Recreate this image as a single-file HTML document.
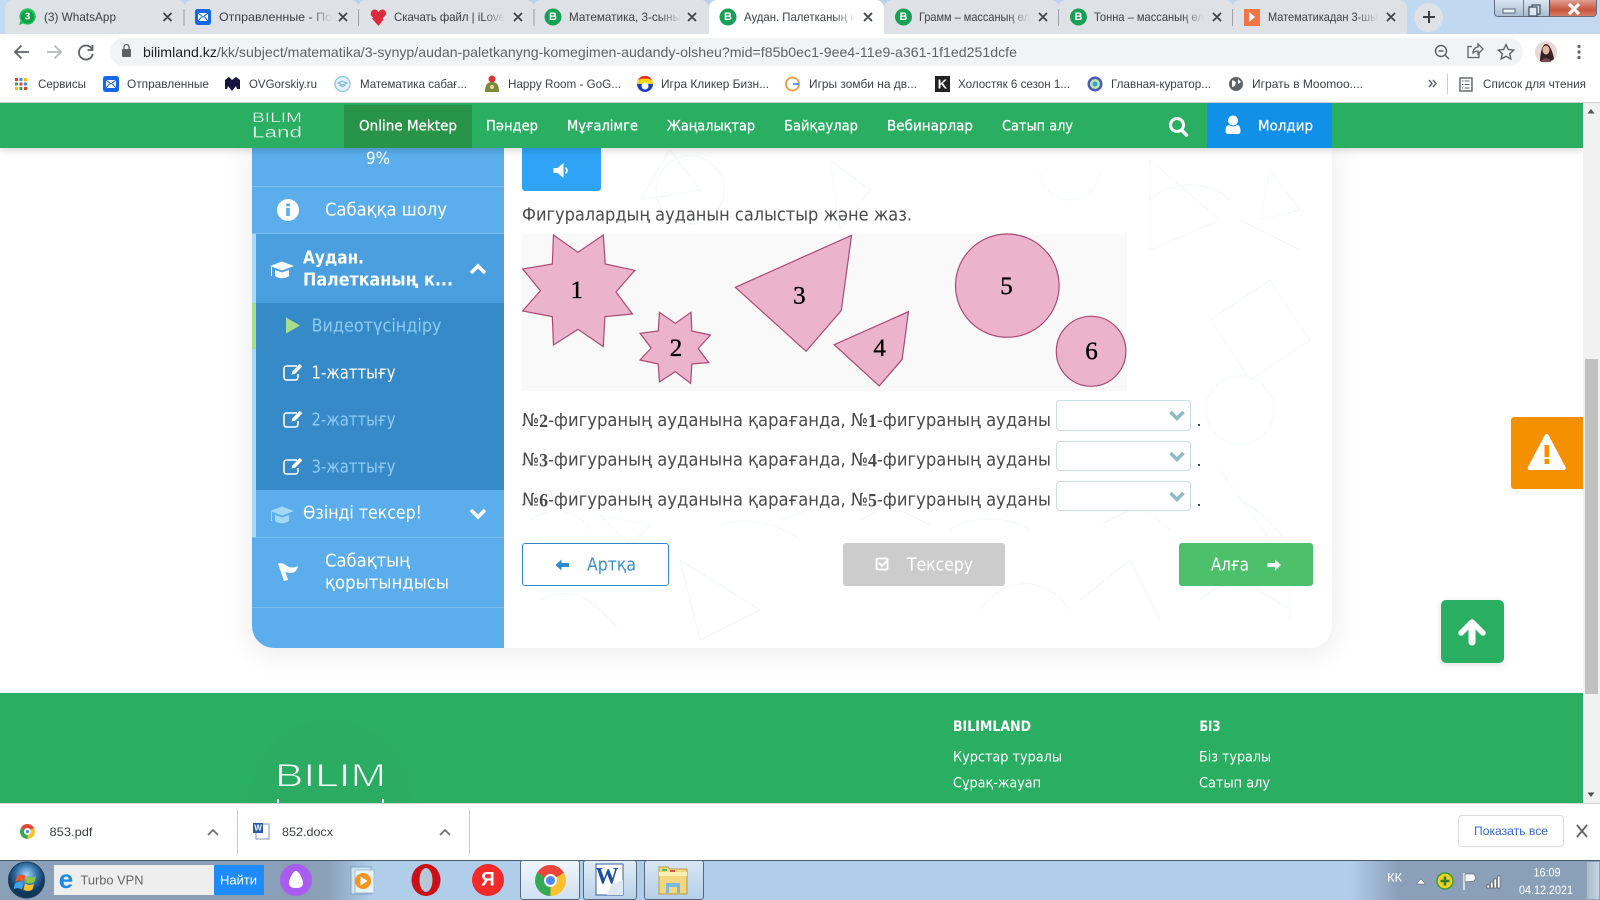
<!DOCTYPE html>
<html lang="kk"><head><meta charset="utf-8"><title>Аудан. Палетканың көмегімен</title>
<style>
html,body{margin:0;padding:0;background:#fff;overflow:hidden}
#w{position:relative;width:1600px;height:900px;overflow:hidden;background:#fff}
#w div{position:absolute;box-sizing:border-box}
.tab{top:0;height:34px;background:#dee1e6;border-radius:8px 8px 0 0}
svg{position:absolute;left:0;top:0}
text{dominant-baseline:central;white-space:pre}
.c{font-family:"Liberation Sans",sans-serif;font-size:12px;fill:#3c4043}
.s{font-family:"DejaVu Sans","Liberation Sans",sans-serif;font-size:18px}
.n{font-family:"DejaVu Sans","Liberation Sans",sans-serif;font-size:14.500px;fill:#fff;stroke:#fff;stroke-width:.25}
.f{font-family:"DejaVu Sans","Liberation Sans",sans-serif;font-size:14.500px;fill:#fff}
.q{font-family:"DejaVu Sans","Liberation Sans",sans-serif;font-size:17.500px;fill:#4a4a4a}
.d{font-family:"Liberation Serif",serif;font-weight:bold;font-size:19px}
.num{font-family:"Liberation Serif",serif;font-size:25px;fill:#000;text-anchor:middle;stroke:#000;stroke-width:.35}
.chrome{border-radius:50%;background:conic-gradient(from -60deg,#e8453c 0 120deg,#fbc02d 120deg 240deg,#34a853 240deg 360deg)}
.chrome:after{content:"";position:absolute;left:28%;top:28%;width:44%;height:44%;border-radius:50%;background:#4c8bf5;border:2px solid #fff;box-sizing:border-box}
</style></head><body><div id="w">

<!-- page -->
<div style="left:0;top:148px;width:1583px;height:545px;background:#fff"></div>
<div style="left:252px;top:140px;width:1080px;height:508px;border-radius:0 0 22px 22px;background:#fff;box-shadow:0 4px 30px rgba(0,0,0,.09)"></div>
<div style="left:252px;top:148px;width:252px;height:500px;background:#5baeeb;border-radius:0 0 0 22px"></div>
<div style="left:252px;top:186px;width:252px;height:1px;background:#7cc0f0"></div>
<div style="left:252px;top:233px;width:252px;height:1px;background:#7cc0f0"></div>
<div style="left:252px;top:234px;width:252px;height:69px;background:#4b9fdf"></div>
<div style="left:252px;top:234px;width:4px;height:303px;background:#a9d9f6"></div>
<div style="left:256px;top:303px;width:248px;height:187px;background:#378ac8"></div>
<div style="left:252px;top:303px;width:4px;height:46px;background:#a6e08a"></div>
<div style="left:252px;top:537px;width:252px;height:1px;background:#7cc0f0"></div>
<div style="left:252px;top:607px;width:252px;height:1px;background:#7cc0f0"></div>

<!-- faint pattern -->
<svg width="1600" height="900" fill="none" stroke="#f4faf8" stroke-width="1.200">
<circle cx="690" cy="190" r="34"/><path d="M640 200l30-50 30 40zM830 160l40 30-30 40zM1040 170a30 30 0 1 0 60 0M1150 160l70 60-70 30zM1240 220l60 30M1210 320l60-40 40 60-60 40z"/>
<circle cx="1240" cy="410" r="34"/><path d="M1220 470l50 70M1290 560v60M680 560l80 50-60 30zM980 610c30-40 70-30 90 0M1080 600l50-40 30 60M540 600c40-20 60 10 80 30M780 520l30-10M1200 600c30-30 60-10 90 10"/>
<path d="M530 520c20-15 50-10 60 10M600 515l50 10-20 20zM720 525c30-10 60 0 80 15M860 520l30-15 40 20M950 530c20-15 60-15 80 0M1100 525l40-20 30 25M1240 500c20 10 40 30 50 50M1150 200c20-20 60-20 80 0M1270 170l30 40-40 10z"/>
</svg>

<div style="left:522px;top:148px;width:79px;height:43px;background:#2fa4f7;border-radius:0 0 3px 3px"></div>
<div style="left:522px;top:234px;width:605px;height:157px;background:#f9f9f9"></div>

<div style="left:1055.500px;top:399.500px;width:135px;height:31px;border:1px solid #c8dfe3;border-radius:4px;background:#fff"></div>
<div style="left:1055.500px;top:441px;width:135px;height:30px;border:1px solid #c8dfe3;border-radius:4px;background:#fff"></div>
<div style="left:1055.500px;top:481px;width:135px;height:30px;border:1px solid #c8dfe3;border-radius:4px;background:#fff"></div>

<div style="left:522px;top:543px;width:147px;height:43px;border:1px solid #2f8ad0;border-radius:3px;background:#fff"></div>
<div style="left:843px;top:543px;width:162px;height:43px;border-radius:3px;background:#ccc"></div>
<div style="left:1179px;top:543px;width:134px;height:43px;border-radius:3px;background:#4cc06a"></div>

<div style="left:1511px;top:417px;width:72px;height:72px;background:#f59000;border-radius:3px 0 0 3px"></div>
<div style="left:1441px;top:600px;width:63px;height:63px;background:#2aae62;border-radius:5px;box-shadow:0 2px 8px rgba(0,0,0,.12)"></div>

<!-- footer -->
<div style="left:0;top:693px;width:1583px;height:110px;background:#2aae62"></div>
<svg width="1600" height="900">
<circle cx="330" cy="800" r="80" fill="#2bac62"/>
<text x="275" y="775.500" textLength="111" lengthAdjust="spacingAndGlyphs" style="font-family:'Liberation Sans',sans-serif;font-size:32px;fill:#fff;stroke:#2aae62;stroke-width:.9">BILIM</text>
<rect x="277" y="799" width="2" height="5" fill="#fff"/><rect x="382" y="799" width="2" height="5" fill="#fff"/>
</svg>

<!-- header nav -->
<div style="left:0;top:103px;width:1583px;height:45px;background:#2aae62;box-shadow:0 2px 8px rgba(0,0,0,.18)"></div>
<div style="left:344px;top:105px;width:128px;height:43px;background:#279447"></div>
<div style="left:1207px;top:103px;width:125px;height:45px;background:#1190e8"></div>

<!-- browser chrome -->
<div style="left:0;top:0;width:1600px;height:34px;background:linear-gradient(90deg,#c3daf0,#b6d1ed 30%,#c2d9f0)"></div>
<div class="tab" style="left:5px;width:180px"></div>
<div class="tab" style="left:184px;width:175px"></div>
<div class="tab" style="left:358px;width:176px"></div>
<div class="tab" style="left:533px;width:176px"></div>
<div class="tab" style="left:884px;width:175px"></div>
<div class="tab" style="left:1058px;width:175px"></div>
<div class="tab" style="left:1232px;width:175px"></div>
<div class="tab" style="left:709px;width:175px;background:#fff"></div>
<div style="left:1414px;top:3px;width:29px;height:29px;border-radius:50%;background:#dee1e6"></div>
<div style="left:0;top:34px;width:1600px;height:69px;background:#fff;border-bottom:1px solid #d0d0d0"></div>
<div style="left:110px;top:38px;width:1413px;height:28px;border-radius:14px;background:#f1f3f4"></div>

<!-- window controls -->
<div style="left:1494px;top:-2px;width:103px;height:19px;border:1px solid #5f6f80;border-radius:0 0 4px 4px;background:linear-gradient(#dfe9f3,#a9bccf);overflow:hidden">
<div style="left:54px;top:0;width:48px;height:18px;background:linear-gradient(#e0a79c,#c9553d 60%,#d9826e);border-left:1px solid #7a3b30"></div>
<div style="left:28px;top:0;width:1px;height:18px;background:#6d7f90"></div>
</div>

<!-- scrollbar -->
<div style="left:1583px;top:103px;width:17px;height:700px;background:#f1f1f1"></div>
<div style="left:1585px;top:359px;width:13px;height:335px;background:#c1c1c1"></div>

<!-- download bar -->
<div style="left:0;top:803px;width:1600px;height:57px;background:#fff;border-top:1px solid #d4d4d4"></div>
<div style="left:237px;top:810px;width:1px;height:44px;background:#ccc"></div>
<div style="left:469px;top:810px;width:1px;height:44px;background:#ccc"></div>
<div style="left:1458px;top:815px;width:106px;height:32px;border:1px solid #dadce0;border-radius:4px;background:#fff"></div>

<!-- taskbar -->
<div style="left:0;top:860px;width:1600px;height:40px;background:linear-gradient(90deg,#8a9fb8 0,#8a9fb8 326px,#b0cdea 372px,#b0cdea 1350px,#8a9fb8 1400px);border-top:1px solid #46586a"></div>
<div style="left:54px;top:865px;width:160px;height:30px;background:#eee"></div>
<div style="left:214px;top:865px;width:50px;height:30px;background:#1e8cff"></div>
<div style="left:520px;top:860px;width:60px;height:40px;background:linear-gradient(#f0f6fc,#cfe0f0);border:1px solid #56687a;border-radius:3px"></div>
<div style="left:583px;top:860px;width:54px;height:40px;background:linear-gradient(#e2edf7,#b9d2ea);border:1px solid #56687a;border-radius:3px"></div>
<div style="left:644px;top:860px;width:60px;height:40px;background:linear-gradient(#d8e6f4,#b5cfe9);border:1px solid #56687a;border-radius:3px"></div>
<div style="left:1586px;top:861px;width:14px;height:39px;background:linear-gradient(90deg,#a9bccd,#c5d6e6);border:1px solid #8fa2b4"></div>
<div class="chrome" style="left:535px;top:865px;width:31px;height:31px"></div>
<div class="chrome" style="left:20px;top:824px;width:15px;height:15px"></div>

<svg width="1600" height="900">
<defs>
<linearGradient id="fd"><stop offset=".8" stop-color="#3c4043"/><stop offset="1" stop-color="#dee1e6"/></linearGradient>
<linearGradient id="fa"><stop offset=".8" stop-color="#3c4043"/><stop offset="1" stop-color="#fff"/></linearGradient>
<radialGradient id="orb" cx=".5" cy=".35"><stop offset="0" stop-color="#a9d6f5"/><stop offset=".6" stop-color="#2f6fa8"/><stop offset="1" stop-color="#12395c"/></radialGradient>
</defs>

<!-- tab separators -->
<g stroke="#9aa0a6"><path d="M184 9v17M358.500 9v17M534 9v17M1058.500 9v17M1232.500 9v17"/></g>

<!-- favicons -->
<path d="M19 25l1.500-4.500a8.200 8.200 0 1 1 3 3z" fill="#25c45f"/><circle cx="27.500" cy="17" r="6.500" fill="#0f9d46"/>
<text x="27.500" y="17" text-anchor="middle" style="font:bold 10px 'Liberation Sans',sans-serif;fill:#fff">3</text>
<g id="mail"><rect x="195" y="9" width="16" height="16" rx="2.500" fill="#1668e3"/><rect x="198" y="13" width="10" height="8" fill="#fff"/><path d="M198 13l5 4 5-4M198 21l3.500-4M208 21l-3.500-4" stroke="#1668e3" fill="none"/></g>
<path d="M378.500 26l-6.500-7.500 1-1-2-2c-1-3 1-6 3.500-6 2 0 3 1 4 2.500 1-1.500 2.500-2.500 4-2.500 2.500 0 4.500 3 3 6l-3 3 1 1z" fill="#dc2b3a"/>
<g fill="#1a9f56"><circle cx="553" cy="17" r="8.500"/><circle cx="728" cy="17" r="8.500"/><circle cx="903.500" cy="17" r="8.500"/><circle cx="1078.500" cy="17" r="8.500"/></g>
<g style="font:bold 11px 'Liberation Sans',sans-serif;fill:#fff" text-anchor="middle"><text x="553" y="17">B</text><text x="728" y="17">B</text><text x="903.500" y="17">B</text><text x="1078.500" y="17">B</text></g>
<rect x="1244" y="9" width="16" height="17" fill="#f0764a"/><path d="M1249 12l6 5-6 5z" fill="#fff"/>

<!-- tab text -->
<text class="c" x="44" y="17" textLength="72" lengthAdjust="spacingAndGlyphs">(3) WhatsApp</text>
<text class="c" x="219" y="17" textLength="113" lengthAdjust="spacingAndGlyphs" style="fill:url(#fd)">Отправленные - По</text>
<text class="c" x="394" y="17" textLength="111" lengthAdjust="spacingAndGlyphs" style="fill:url(#fd)">Скачать файл | iLove</text>
<text class="c" x="569" y="17" textLength="112" lengthAdjust="spacingAndGlyphs" style="fill:url(#fd)">Математика, 3-сыны</text>
<text class="c" x="744" y="17" textLength="111" lengthAdjust="spacingAndGlyphs" style="fill:url(#fa)">Аудан. Палетканың к</text>
<text class="c" x="919" y="17" textLength="111" lengthAdjust="spacingAndGlyphs" style="fill:url(#fd)">Грамм – массаның өл</text>
<text class="c" x="1094" y="17" textLength="110" lengthAdjust="spacingAndGlyphs" style="fill:url(#fd)">Тонна – массаның өл</text>
<text class="c" x="1268" y="17" textLength="110" lengthAdjust="spacingAndGlyphs" style="fill:url(#fd)">Математикадан 3-шы</text>
<!-- tab close -->
<g stroke="#3c4043" stroke-width="1.700" fill="none">
<path d="M163.500 13l8 8m0-8l-8 8M339 13l8 8m0-8l-8 8M514 13l8 8m0-8l-8 8M688 13l8 8m0-8l-8 8M864 13l8 8m0-8l-8 8M1039 13l8 8m0-8l-8 8M1213 13l8 8m0-8l-8 8M1387 13l8 8m0-8l-8 8"/>
<path d="M1423 17h12M1429 11v12" stroke-width="2"/>
</g>
<!-- window buttons glyphs -->
<rect x="1503" y="9" width="12" height="4" fill="#eef3f8" stroke="#56687a"/>
<g fill="none" stroke="#44566a" stroke-width="1.300"><rect x="1532" y="5" width="8" height="9" fill="#dfe8f0"/><rect x="1529" y="7" width="8" height="9" fill="#dfe8f0"/></g>
<path d="M1569 4l10 10m0-10l-10 10" stroke="#fff" stroke-width="3.200"/>

<!-- toolbar icons -->
<g fill="none" stroke="#5f6368" stroke-width="1.800">
<path d="M29 52H15M21.500 45.500L15 52l6.500 6.500"/>
<path d="M47 52h14M54.500 45.500L61 52l-6.500 6.500" stroke="#b5b8bc"/>
<path d="M92 49a7 7 0 1 0 .8 5M92.500 45v5h-5"/>
<circle cx="1441" cy="51" r="5.500" stroke-width="1.500"/><path d="M1445 55l4 4M1438.500 51h5" stroke-width="1.500"/>
<path d="M1479 52v5.500h-11v-11h4M1473 53c0-4 3-6 5-6v-3l5 5-5 5v-3c-2 0-4 1-5 2z" stroke-width="1.300"/>
<path d="M1506 44.500l2.300 5 5.400.6-4 3.600 1.100 5.300-4.800-2.700-4.800 2.700 1.100-5.300-4-3.600 5.400-.6z" stroke-width="1.400"/>
</g>
<rect x="122" y="49" width="9" height="8" rx="1" fill="#5f6368"/><path d="M124 49v-2a2.500 2.500 0 0 1 5 0v2" fill="none" stroke="#5f6368" stroke-width="1.300"/>
<circle cx="1546" cy="52" r="11" fill="#e6d8d4"/><path d="M1540 61c0-6 2-17 6-17s7 9 8 15c-3 3-11 4-14 2z" fill="#3a2222"/><ellipse cx="1546" cy="50" rx="3.500" ry="4.500" fill="#e3b9a6"/><path d="M1541 62c1-5 9-5 10 0z" fill="#7a4a5a"/>
<g fill="#5f6368"><circle cx="1579" cy="46.500" r="1.600"/><circle cx="1579" cy="52" r="1.600"/><circle cx="1579" cy="57.500" r="1.600"/></g>

<!-- URL -->
<text x="143" y="52" textLength="874" lengthAdjust="spacingAndGlyphs" style="font-family:'Liberation Sans',sans-serif;font-size:14px;fill:#5f6368"><tspan fill="#202124">bilimland.kz</tspan>/kk/subject/matematika/3-synyp/audan-paletkanyng-komegimen-audandy-olsheu?mid=f85b0ec1-9ee4-11e9-a361-1f1ed251dcfe</text>

<!-- bookmarks -->
<g>
<g fill="#e33b2e"><rect x="15" y="78" width="3" height="3"/><rect x="19.500" y="78" width="3" height="3" fill="#4285f4"/><rect x="24" y="78" width="3" height="3" fill="#fbbc05"/><rect x="15" y="82.500" width="3" height="3" fill="#34a853"/><rect x="19.500" y="82.500" width="3" height="3"/><rect x="24" y="82.500" width="3" height="3" fill="#4285f4"/><rect x="15" y="87" width="3" height="3" fill="#fbbc05"/><rect x="19.500" y="87" width="3" height="3" fill="#34a853"/><rect x="24" y="87" width="3" height="3"/></g>
<rect x="103" y="76" width="16" height="16" rx="2.500" fill="#1668e3"/><rect x="106" y="80" width="10" height="8" fill="#fff"/><path d="M106 80l5 4 5-4M106 88l3.500-4M116 88l-3.500-4" stroke="#1668e3" fill="none"/>
<path d="M225 80l4-3 3 3 4-3 4 3v9h-3l-1-3-4 5-4-5-1 3h-2z" fill="#14143c"/>
<circle cx="342.500" cy="84" r="7.500" fill="#e4f2fa" stroke="#8fc6e4" stroke-width="1.300"/><path d="M338 83l4.500-2 4.500 2-4.500 2zM339.500 85c2 2 4 2 6 0" stroke="#6fb2d8" fill="none"/>
<circle cx="492" cy="79" r="3.500" fill="#d33"/><path d="M485 92c0-8 3-10 7-10s7 2 7 10z" fill="#7a8a3a"/><circle cx="492" cy="87" r="2" fill="#e8d9a0"/>
<circle cx="645" cy="84" r="8" fill="#1c3fb8"/><path d="M637 84a8 8 0 0 1 16 0z" fill="#f7d417"/><path d="M638 80a8 8 0 0 1 14 0c-4-2-10-2-14 0z" fill="#e8281f"/><circle cx="645" cy="86" r="3.500" fill="#fff"/>
<circle cx="792.500" cy="84" r="6.500" fill="none" stroke="#ea9a3f" stroke-width="1.800"/><path d="M793 84h6" stroke="#4c8bf5" stroke-width="1.800"/>
<rect x="935" y="76" width="15" height="16" fill="#222"/><text x="942.500" y="84" text-anchor="middle" style="font:bold 13px 'Liberation Sans',sans-serif;fill:#fff">K</text>
<circle cx="1095" cy="84" r="7.500" fill="#4a5bb5"/><circle cx="1095" cy="84" r="5" fill="#bfe6a9"/><circle cx="1095" cy="84" r="2.500" fill="#2aa7d8"/>
<circle cx="1236" cy="84" r="7" fill="#5f6368"/><path d="M1232 80l4 2-1 4-3 1zM1238 79l3 3-3 2z" fill="#fff"/>
<path d="M1429 80l3 3.500-3 3.500M1433 80l3 3.500-3 3.500" stroke="#5f6368" stroke-width="1.500" fill="none"/>
<path d="M1447.500 74v20" stroke="#ccc"/>
<rect x="1460" y="78" width="12" height="13" fill="none" stroke="#5f6368" stroke-width="1.400"/><path d="M1462 81h1.500m1 0h5M1462 84.500h1.500m1 0h5M1462 88h1.500m1 0h5" stroke="#5f6368"/>
</g>
<g class="c">
<text class="c" x="38" y="84" textLength="48" lengthAdjust="spacingAndGlyphs">Сервисы</text>
<text class="c" x="127" y="84" textLength="82" lengthAdjust="spacingAndGlyphs">Отправленные</text>
<text class="c" x="249" y="84" textLength="68" lengthAdjust="spacingAndGlyphs">OVGorskiy.ru</text>
<text class="c" x="360" y="84" textLength="107" lengthAdjust="spacingAndGlyphs">Математика сабағ...</text>
<text class="c" x="508" y="84" textLength="113" lengthAdjust="spacingAndGlyphs">Happy Room - GoG...</text>
<text class="c" x="661" y="84" textLength="108" lengthAdjust="spacingAndGlyphs">Игра Кликер Бизн...</text>
<text class="c" x="809" y="84" textLength="108" lengthAdjust="spacingAndGlyphs">Игры зомби на дв...</text>
<text class="c" x="958" y="84" textLength="112" lengthAdjust="spacingAndGlyphs">Холостяк 6 сезон 1...</text>
<text class="c" x="1111" y="84" textLength="100" lengthAdjust="spacingAndGlyphs">Главная-куратор...</text>
<text class="c" x="1252" y="84" textLength="111" lengthAdjust="spacingAndGlyphs">Играть в Moomoo....</text>
<text class="c" x="1483" y="84" textLength="103" lengthAdjust="spacingAndGlyphs">Список для чтения</text>
</g>

<!-- nav -->
<text x="252" y="117.500" textLength="50" lengthAdjust="spacingAndGlyphs" style="font:13.500px 'Liberation Sans',sans-serif;fill:#eef9f2;stroke:#2aae62;stroke-width:.25">BILIM</text>
<text x="252" y="133" textLength="50" lengthAdjust="spacingAndGlyphs" style="font:15.500px 'Liberation Sans',sans-serif;fill:#eef9f2;stroke:#2aae62;stroke-width:.25">Land</text>
<text class="n" x="359" y="126.500" textLength="98" lengthAdjust="spacingAndGlyphs">Online Mektep</text>
<text class="n" x="486" y="126.500" textLength="52" lengthAdjust="spacingAndGlyphs">Пәндер</text>
<text class="n" x="567" y="126.500" textLength="71" lengthAdjust="spacingAndGlyphs">Мұғалімге</text>
<text class="n" x="667" y="126.500" textLength="88" lengthAdjust="spacingAndGlyphs">Жаңалықтар</text>
<text class="n" x="784" y="126.500" textLength="74" lengthAdjust="spacingAndGlyphs">Байқаулар</text>
<text class="n" x="887" y="126.500" textLength="86" lengthAdjust="spacingAndGlyphs">Вебинарлар</text>
<text class="n" x="1002" y="126.500" textLength="71" lengthAdjust="spacingAndGlyphs">Сатып алу</text>
<text class="n" x="1258" y="126.500" textLength="55" lengthAdjust="spacingAndGlyphs">Молдир</text>
<circle cx="1177" cy="125" r="6.500" fill="none" stroke="#fff" stroke-width="3"/><path d="M1181.500 130l5 5" stroke="#fff" stroke-width="3.500" stroke-linecap="round"/>
<circle cx="1233" cy="120.500" r="5" fill="#fff"/><path d="M1225.500 131c0-5 2-6 3.500-6 2.500 2 5.500 2 8 0 1.500 0 3.500 1 3.500 6 0 2-1 3-3 3h-9c-2 0-3-1-3-3z" fill="#fff"/>
<path d="M1591 109l-3.500 4.500h7zM1591 797l-3.500-4.500h7z" fill="#505050"/>

<!-- sidebar -->
<text class="s" x="366" y="159" textLength="24" lengthAdjust="spacingAndGlyphs" style="fill:#fff;font-size:17px">9%</text>
<circle cx="288" cy="210" r="11" fill="#fff"/><rect x="286.200" y="208" width="3.600" height="8" fill="#5baeeb"/><rect x="286.200" y="203.500" width="3.600" height="3" fill="#5baeeb"/>
<text class="s" x="325" y="210" textLength="122" lengthAdjust="spacingAndGlyphs" style="fill:#fff">Сабаққа шолу</text>
<path d="M270 266l12-4.500 12 4.500-12 4.500zM275 270v6c4 3 10 3 14 0v-6l-7 2.500z" fill="#fff"/><path d="M271.500 267v9" stroke="#fff"/>
<text class="s" x="303" y="258" textLength="61" lengthAdjust="spacingAndGlyphs" style="fill:#fff;font-weight:bold">Аудан.</text>
<text class="s" x="303" y="280" textLength="150" lengthAdjust="spacingAndGlyphs" style="fill:#fff;font-weight:bold">Палетканың к...</text>
<path d="M471 273l7-7 7 7" fill="none" stroke="#fff" stroke-width="3.500"/>
<path d="M286 317.500l14 8-14 8z" fill="#a6e08a"/>
<text class="s" x="311.500" y="326" textLength="130" lengthAdjust="spacingAndGlyphs" style="fill:#8ccbf6">Видеотүсіндіру</text>
<g fill="none" stroke="#fff" stroke-width="1.600"><path d="M297 366h-10c-2 0-3 1-3 3v8c0 2 1 3 3 3h8c2 0 3-1 3-3v-3"/><path d="M292 374l.8-2.500 7-7 2 2-7 7z" fill="#fff" stroke-width=".8"/></g>
<text class="s" x="311.500" y="373" textLength="84" lengthAdjust="spacingAndGlyphs" style="fill:#fff">1-жаттығу</text>
<g transform="translate(0,47)" fill="none" stroke="#fff" stroke-width="1.600"><path d="M297 366h-10c-2 0-3 1-3 3v8c0 2 1 3 3 3h8c2 0 3-1 3-3v-3"/><path d="M292 374l.8-2.500 7-7 2 2-7 7z" fill="#fff" stroke-width=".8"/></g>
<text class="s" x="311.500" y="420" textLength="84" lengthAdjust="spacingAndGlyphs" style="fill:#8ccbf6">2-жаттығу</text>
<g transform="translate(0,94)" fill="none" stroke="#fff" stroke-width="1.600"><path d="M297 366h-10c-2 0-3 1-3 3v8c0 2 1 3 3 3h8c2 0 3-1 3-3v-3"/><path d="M292 374l.8-2.500 7-7 2 2-7 7z" fill="#fff" stroke-width=".8"/></g>
<text class="s" x="311.500" y="467" textLength="84" lengthAdjust="spacingAndGlyphs" style="fill:#8ccbf6">3-жаттығу</text>
<path d="M270 511l12-4.500 12 4.500-12 4.500zM275 515v6c4 3 10 3 14 0v-6l-7 2.500z" fill="#a5d7f7"/><path d="M271.500 512v9" stroke="#a5d7f7"/>
<text class="s" x="303" y="513" textLength="119" lengthAdjust="spacingAndGlyphs" style="fill:#fff">Өзінді тексер!</text>
<path d="M471 510l7 7 7-7" fill="none" stroke="#fff" stroke-width="3.500"/>
<path d="M278 563.500c5-1.500 8 2 11 3.500 3 1 6 .5 9-1-1 5-4 7-7 7-2 0-3-.5-5.500-1l2.500 8-4 1z" fill="#fff"/>
<text class="s" x="325" y="561" textLength="85" lengthAdjust="spacingAndGlyphs" style="fill:#fff">Сабақтың</text>
<text class="s" x="325" y="583" textLength="124" lengthAdjust="spacingAndGlyphs" style="fill:#fff">қорытындысы</text>

<!-- main -->
<path d="M553.500 168h4l6-5v15l-6-5h-4z" fill="#fff"/><path d="M565.500 167.500c2 2 2 4 0 6" fill="none" stroke="#fff" stroke-width="1.500"/>
<text class="q" x="522" y="215.500" textLength="390" lengthAdjust="spacingAndGlyphs">Фигуралардың ауданын салыстыр және жаз.</text>

<g transform="translate(510,140) scale(.3953,.3333)" fill="#ecb3cc" stroke="#a94a73" stroke-width="1.200">
<path vector-effect="non-scaling-stroke" d="M110 285L172 337 236 285 241 372 316 391 268 456 310 522 240 530 236 620 172 568 110 615 107 530 32 513 77 452 32 387 107 372Z"/>
<path vector-effect="non-scaling-stroke" d="M378 517L418 550 458 517 460 573 507 585 476 626 503 668 460 672 457 730 418 695 378 726 375 672 329 660 357 624 329 580 375 573Z"/>
<path vector-effect="non-scaling-stroke" d="M570 442L864 286 838 512 749 634Z"/>
<path vector-effect="non-scaling-stroke" d="M820 614L1008 515 992 658 934 738Z"/>
<ellipse vector-effect="non-scaling-stroke" cx="1258" cy="437" rx="131" ry="155"/>
<ellipse vector-effect="non-scaling-stroke" cx="1470" cy="634" rx="88" ry="105"/>
</g>
<text class="num" x="576.800" y="290.500">1</text><text class="num" x="676" y="348.500">2</text><text class="num" x="799.400" y="296">3</text><text class="num" x="879.600" y="348.500">4</text><text class="num" x="1006.500" y="286.500">5</text><text class="num" x="1091.500" y="351.500">6</text>

<text class="q" x="522" y="421" textLength="529" lengthAdjust="spacingAndGlyphs">№<tspan class="d">2</tspan>-фигураның ауданына қарағанда, №<tspan class="d">1</tspan>-фигураның ауданы</text>
<text class="q" x="522" y="460.500" textLength="529" lengthAdjust="spacingAndGlyphs">№<tspan class="d">3</tspan>-фигураның ауданына қарағанда, №<tspan class="d">4</tspan>-фигураның ауданы</text>
<text class="q" x="522" y="500.500" textLength="529" lengthAdjust="spacingAndGlyphs">№<tspan class="d">6</tspan>-фигураның ауданына қарағанда, №<tspan class="d">5</tspan>-фигураның ауданы</text>
<g fill="none" stroke="#8dbbc4" stroke-width="3.500"><path d="M1170.500 412l6.500 6.500 6.500-6.500M1170.500 453l6.500 6.500 6.500-6.500M1170.500 493l6.500 6.500 6.500-6.500"/></g>
<g fill="#4a4a4a"><rect x="1198" y="424" width="2" height="2"/><rect x="1198" y="464" width="2" height="2"/><rect x="1198" y="504" width="2" height="2"/></g>

<path d="M555.500 565l6-5.500v3.500h7.500v4h-7.500v3.500z" fill="#2f8ad0"/>
<text class="s" x="587" y="565" textLength="49" lengthAdjust="spacingAndGlyphs" style="fill:#3a8fd0">Артқа</text>
<rect x="876.500" y="558.500" width="11" height="11" rx="1.500" fill="none" stroke="#fff" stroke-width="1.800"/><path d="M879 563l3 3 6-6.500" fill="none" stroke="#fff" stroke-width="2"/>
<text class="s" x="907" y="565" textLength="66" lengthAdjust="spacingAndGlyphs" style="fill:#fff">Тексеру</text>
<text class="s" x="1211" y="565" textLength="38" lengthAdjust="spacingAndGlyphs" style="fill:#fff">Алға</text>
<path d="M1281 565l-6-5.500v3.500h-7.500v4h7.500v3.500z" fill="#fff"/>

<path d="M1546.700 436l17 32h-34z" fill="#fff" stroke="#fff" stroke-width="4" stroke-linejoin="round"/>
<rect x="1544.500" y="445" width="4.500" height="12" fill="#f59000"/><rect x="1544.500" y="459" width="4.500" height="5" fill="#f59000"/>
<path d="M1461 633l11-11 11 11" fill="none" stroke="#fff" stroke-width="5.500" stroke-linecap="round" stroke-linejoin="round"/><path d="M1472 626v16" stroke="#fff" stroke-width="7" stroke-linecap="round"/>

<!-- footer text -->
<text class="f" x="953" y="727" textLength="78" lengthAdjust="spacingAndGlyphs" style="font-weight:bold">BILIMLAND</text>
<text class="f" x="1199.500" y="727" textLength="21" lengthAdjust="spacingAndGlyphs" style="font-weight:bold">БІЗ</text>
<text class="f" x="953" y="757.500" textLength="109" lengthAdjust="spacingAndGlyphs">Курстар туралы</text>
<text class="f" x="953" y="783.500" textLength="88" lengthAdjust="spacingAndGlyphs">Сұрақ-жауап</text>
<text class="f" x="1199" y="757.500" textLength="72" lengthAdjust="spacingAndGlyphs">Біз туралы</text>
<text class="f" x="1199" y="783.500" textLength="71" lengthAdjust="spacingAndGlyphs">Сатып алу</text>

<!-- download bar -->
<text class="c" x="49.500" y="832" textLength="43" lengthAdjust="spacingAndGlyphs">853.pdf</text>
<path d="M208 835l5-5 5 5M440 835l5-5 5 5" fill="none" stroke="#6b6f73" stroke-width="1.700"/>
<rect x="256" y="824" width="13" height="15" fill="#fff" stroke="#7f95b5"/><rect x="253" y="823" width="10" height="10" fill="#2a5aa8"/><text x="258" y="828" text-anchor="middle" style="font:bold 8px 'Liberation Sans',sans-serif;fill:#fff">W</text>
<text class="c" x="282" y="832" textLength="51" lengthAdjust="spacingAndGlyphs">852.docx</text>
<text x="1474" y="831" textLength="74" lengthAdjust="spacingAndGlyphs" style="font:12px 'Liberation Sans',sans-serif;fill:#3367d6">Показать все</text>
<path d="M1577 825l10 12m0-12l-10 12" stroke="#5f6368" stroke-width="1.800"/>

<!-- taskbar -->
<circle cx="26.500" cy="880" r="18" fill="url(#orb)" stroke="#1d3a55"/>
<path d="M17 876c3-2 6-2 8.500 0l-1.500 6c-3-2-6-2-8.500 0z" fill="#e8582a"/><path d="M27 876c3 2 6 2 9 0l-1.500 6c-3 2-6 2-9 0z" fill="#8cc63f"/><path d="M15 883.500c3-2 6-2 8.500 0l-1.500 6c-3-2-6-2-8.500 0z" fill="#3ea6e8"/><path d="M25 883.500c3 2 6 2 9 0l-1.500 6c-3 2-6 2-9 0z" fill="#fbc02d"/>
<text x="66" y="879" text-anchor="middle" style="font:bold 26px 'Liberation Sans',sans-serif;fill:#1b8bea">e</text>
<text x="80.500" y="880" textLength="63" lengthAdjust="spacingAndGlyphs" style="font:13px 'Liberation Sans',sans-serif;fill:#666">Turbo VPN</text>
<text x="220" y="880" textLength="37" lengthAdjust="spacingAndGlyphs" style="font:13px 'Liberation Sans',sans-serif;fill:#fff">Найти</text>
<circle cx="296" cy="880" r="16" fill="#a85cf0"/><path d="M296 871c3 0 7 8 7 12s-3 5-7 5-7-1-7-5 4-12 7-12z" fill="#fff"/>
<rect x="351" y="867" width="20" height="27" fill="#d4e5f2" stroke="#7ea4c4"/><rect x="355" y="870" width="19" height="23" fill="#e9f2f9" stroke="#a0bdd4"/><circle cx="363" cy="881" r="8" fill="#f7941e"/><path d="M360.500 876.500l7 4.500-7 4.500z" fill="#fff"/>
<ellipse cx="426" cy="880" rx="14.500" ry="16" fill="#cc0f16"/><ellipse cx="426" cy="880" rx="6.500" ry="12" fill="#b5c9dd"/>
<circle cx="488" cy="880" r="16" fill="#f22a2a"/><text x="488" y="880" text-anchor="middle" style="font:bold 19px 'Liberation Sans',sans-serif;fill:#fff">Я</text>
<rect x="596" y="864" width="27" height="31" fill="#fff" stroke="#3a5e9c"/><path d="M612 884l11-4v15h-16z" fill="#dfe8f2"/><text x="607" y="876" text-anchor="middle" style="font:bold 23px 'Liberation Serif',serif;fill:#1f4fa3">W</text>
<path d="M659 867h9l2 2h17v25h-28z" fill="#f2d77e" stroke="#b89a45"/><path d="M659 872h28v4h-28z" fill="#fbeeb0"/><rect x="662" y="869" width="5" height="2" fill="#5cb85c"/><rect x="670" y="870" width="5" height="2" fill="#d9534f"/><path d="M666 883h14v10h-3v-6h-8v6h-3z" fill="#79b9e6"/>

<text x="1387" y="877.500" textLength="15" lengthAdjust="spacingAndGlyphs" style="font:12px 'Liberation Sans',sans-serif;fill:#fff">КК</text>
<path d="M1421 879l-4.500 5h9z" fill="#fff" stroke="#555" stroke-width=".5"/>
<circle cx="1445" cy="881" r="8" fill="#f4d21f" stroke="#3f9c35" stroke-width="1.500"/><path d="M1445 876.500v9M1440.500 881h9" stroke="#2e7d32" stroke-width="2.500"/>
<path d="M1464 873v17" stroke="#fff" stroke-width="1.300"/><path d="M1465 874h9l2 4-2 3-9 1z" fill="#f3f6f9" stroke="#555" stroke-width=".6"/>
<g fill="#fff" stroke="#333" stroke-width=".5"><rect x="1487" y="885" width="2.500" height="3"/><rect x="1490.500" y="882" width="2.500" height="6"/><rect x="1494" y="879" width="2.500" height="9"/><rect x="1497.500" y="876" width="2.500" height="12"/></g>
<text x="1547" y="872.500" text-anchor="middle" textLength="27" lengthAdjust="spacingAndGlyphs" style="font:12px 'Liberation Sans',sans-serif;fill:#fff">16:09</text>
<text x="1546" y="890" text-anchor="middle" textLength="54" lengthAdjust="spacingAndGlyphs" style="font:12px 'Liberation Sans',sans-serif;fill:#fff">04.12.2021</text>
</svg>
</div></body></html>
